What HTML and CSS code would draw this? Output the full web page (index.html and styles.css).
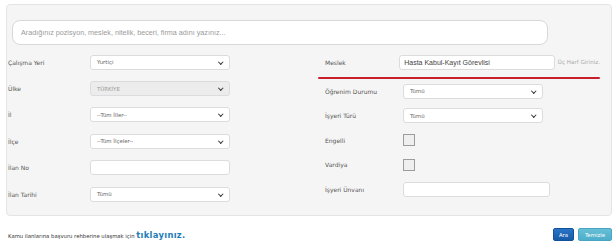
FILE: index.html
```html
<!DOCTYPE html>
<html lang="tr">
<head>
    <meta charset="UTF-8">
    <title>İlan Arama</title>
    <link rel="stylesheet" href="styles.css">
</head>
<body>
    <div class="panel">
        <div class="search">
            <input type="text" placeholder="Aradığınız pozisyon, meslek, nitelik, beceri, firma adını yazınız...">
        </div>
        <div class="cols">
            <div class="col left">
                <div class="row"><label>Çalışma Yeri</label><div class="select"><span>Yurtiçi</span></div></div>
                <div class="row"><label>Ülke</label><div class="select disabled"><span>TÜRKİYE</span></div></div>
                <div class="row"><label>İl</label><div class="select"><span>--Tüm İller--</span></div></div>
                <div class="row"><label>İlçe</label><div class="select"><span>--Tüm İlçeler--</span></div></div>
                <div class="row"><label>İlan No</label><div class="input"></div></div>
                <div class="row"><label>İlan Tarihi</label><div class="select"><span>Tümü</span></div></div>
            </div>
            <div class="col right">
                <div class="row meslek">
                    <label>Meslek</label>
                    <div class="input wide">Hasta Kabul-Kayıt Görevlisi</div>
                    <span class="hint">Üç Harf Giriniz.</span>
                </div>
                <div class="mark"></div>
                <div class="row small"><label>Öğrenim Durumu</label><div class="select"><span>Tümü</span></div></div>
                <div class="row small"><label>İşyeri Türü</label><div class="select"><span>Tümü</span></div></div>
                <div class="row small"><label>Engelli</label><div class="check"></div></div>
                <div class="row small"><label>Vardiya</label><div class="check"></div></div>
                <div class="row small"><label>İşyeri Ünvanı</label><div class="input unvan"></div></div>
            </div>
        </div>
    </div>
    <div class="footer">
        <p>Kamu ilanlarına başvuru rehberine ulaşmak için <a href="#">tıklayınız.</a></p>
        <div class="buttons">
            <button class="btn ara">Ara</button>
            <button class="btn temizle">Temizle</button>
        </div>
    </div>
</body>
</html>
```
FILE: styles.css
```css
body {
    margin: 0;
    width: 616px;
    height: 244px;
    background-color: #fff;
    font-family: "DejaVu Sans", Verdana, sans-serif;
    color: #444;
    overflow: hidden;
}

.panel {
    box-sizing: border-box;
    margin: 4px 4px 0 6px;
    height: 212px;
    padding-top: 15px;
    background-color: #f5f5f5;
    border: 1px solid #e4e4e4;
    border-radius: 4px;
}

.search {
    margin-left: 5px;
}

.search input {
    box-sizing: border-box;
    width: 536px;
    height: 25px;
    padding: 0 8px;
    border: 1px solid #d8d8d8;
    border-radius: 8px;
    background: #fff;
    font-family: "Liberation Sans", Arial, sans-serif;
    font-size: 7.2px;
    outline: none;
}

.search input::placeholder {
    color: #9a9a9a;
}

.cols {
    display: flex;
    margin-top: 4px;
}

.col.left {
    width: 310px;
    padding-left: 1px;
}

.col.right {
    width: 282px;
}

.row {
    display: flex;
    align-items: center;
    height: 26.4px;
}

.row.small {
    height: 24.5px;
}

.row label {
    width: 82px;
    font-size: 6px;
    color: #555;
}

.right .row label {
    width: 78px;
    padding-left: 7px;
}

.select, .input {
    box-sizing: border-box;
    position: relative;
    width: 140px;
    height: 15px;
    padding: 0 6px;
    background: #fff;
    border: 1px solid #dcdcdc;
    border-radius: 3px;
    display: flex;
    align-items: center;
    font-size: 5.4px;
    color: #666;
}

.select::after {
    content: "";
    position: absolute;
    right: 7px;
    top: 4px;
    width: 2.5px;
    height: 2.5px;
    border-right: 1.3px solid #333;
    border-bottom: 1.3px solid #333;
    transform: rotate(45deg);
}

.select.disabled {
    background: #ececec;
    color: #9a9a9a;
}

.input.wide {
    width: 163px;
    padding: 0 4px;
    font-family: "Liberation Sans", Arial, sans-serif;
    font-size: 7px;
    color: #444;
}

.input.unvan {
    width: 147px;
}

.hint {
    margin-left: 3px;
    font-size: 5.6px;
    color: #aaa;
    white-space: nowrap;
}

.mark {
    height: 2.4px;
    margin-top: 1.2px;
    background-color: #c8202b;
    border-radius: 1.2px;
}

.check {
    box-sizing: border-box;
    width: 12px;
    height: 12px;
    border: 1px solid #9c9c9c;
    background: #efefef;
}

.footer {
    display: flex;
    justify-content: space-between;
    align-items: center;
    height: 13px;
    margin-top: 12px;
    padding: 0 4px 0 8px;
}

.footer p {
    margin: 0;
    font-size: 5.3px;
    color: #333;
}

.footer a {
    color: #1f7db7;
    font-weight: bold;
    font-size: 8.4px;
    letter-spacing: 0.3px;
    text-decoration: none;
}

.buttons {
    display: flex;
    gap: 4px;
}

.btn {
    height: 13px;
    padding: 0;
    border: 1px solid transparent;
    border-radius: 2px;
    color: #fff;
    font-family: "DejaVu Sans", Verdana, sans-serif;
    font-size: 5.4px;
}

.btn.ara {
    width: 21px;
    background: linear-gradient(#2a74c6, #155ba8);
    border-color: #12509a;
}

.btn.temizle {
    width: 34px;
    background: linear-gradient(#66bfd6, #4eaecb);
    border-color: #48a6c2;
}
```
